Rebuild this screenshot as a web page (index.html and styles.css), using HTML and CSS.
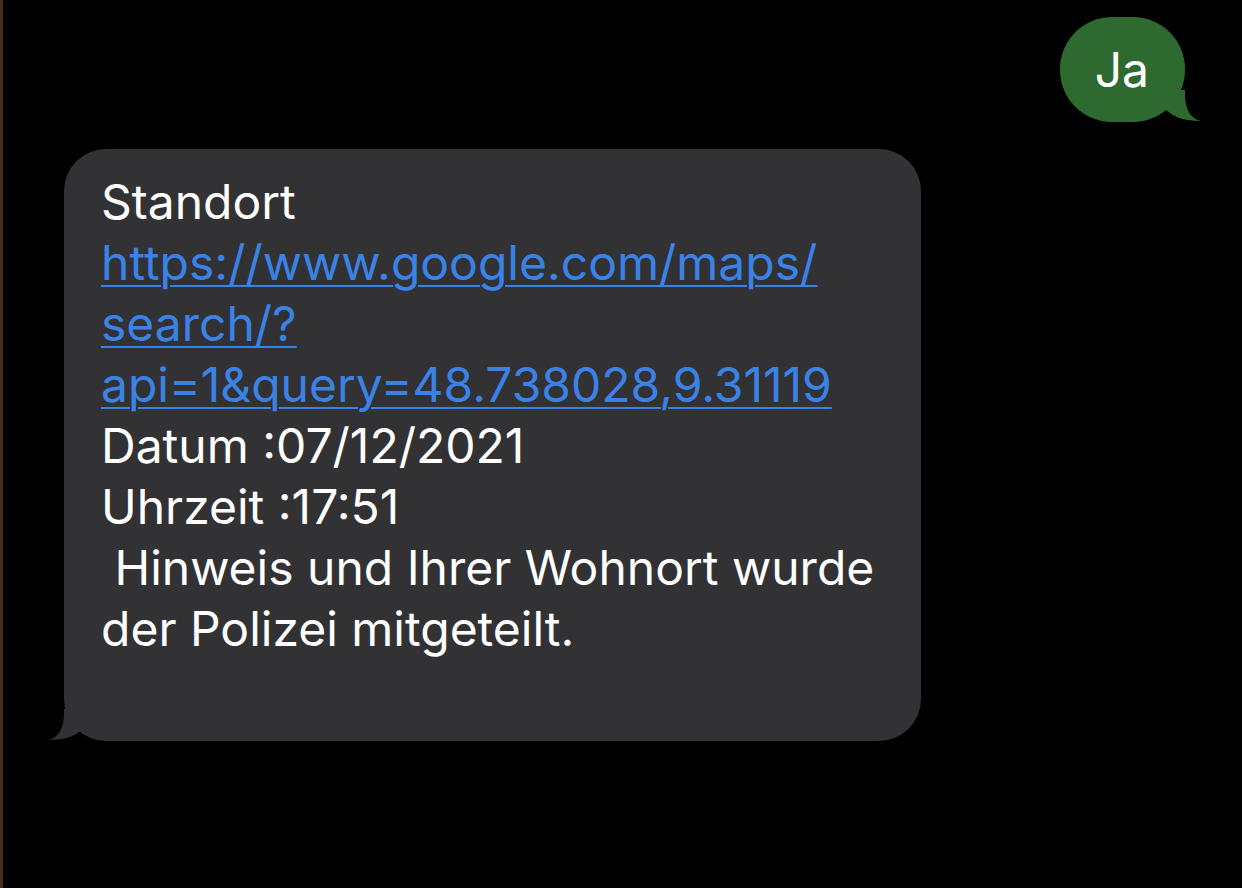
FILE: index.html
```html
<!DOCTYPE html>
<html lang="de">
<head>
<meta charset="utf-8">
<title>Nachrichten</title>
<link rel="stylesheet" href="styles.css">
</head>
<body>
<main class="thread">
  <div class="bubble sent">
    <span class="text">Ja</span>
    <svg class="tail tail-right" width="44" height="32" viewBox="0 0 44 32"><path d="M28,0 L28,4 C28,20 34,29 44,31 Q22,32 9,20 L0,12 L0,0 Z"/></svg>
  </div>
  <div class="bubble received">
    <p class="text">Standort<br><a class="link" href="#">https://www.google.com/maps/<br>search/?<br>api=1&amp;query=48.738028,9.31119</a><br>Datum :07/12/2021<br>Uhrzeit :17:51<br>&nbsp;Hinweis und Ihrer Wohnort wurde<br>der Polizei mitgeteilt.<br>&nbsp;</p>
    <svg class="tail tail-left" width="44" height="32" viewBox="0 0 44 32"><path d="M16,0 L16,4 C16,20 10,29 0,31 Q22,32 35,20 L44,12 L44,0 Z"/></svg>
  </div>
</main>
</body>
</html>
```
FILE: styles.css
```css
html, body {
  margin: 0;
  padding: 0;
  background: #000;
}
body {
  border-left: 3px solid #4a2c1e;
  min-height: 888px;
  box-sizing: border-box;
  font-family: "Inter", "Noto Sans", sans-serif;
  color: #fff;
}
.thread {
  display: flex;
  flex-direction: column;
  padding-top: 17px;
  gap: 27px;
}
.bubble {
  position: relative;
  font-size: 48px;
  line-height: 61px;
}
.text {
  margin: 0;
}
.sent {
  align-self: flex-end;
  margin-right: 57px;
  background: #2e6a30;
  border-radius: 52px;
  padding: 22px 36px 22px 35px;
}
.received {
  align-self: flex-start;
  margin-left: 61px;
  width: 857px;
  box-sizing: border-box;
  background: #323234;
  border-radius: 42px;
  padding: 22px 37px 21px 37px;
}
.link {
  color: #3b82e6;
  text-decoration: underline;
  text-decoration-thickness: 2px;
  text-underline-offset: 5px;
}
.tail {
  position: absolute;
  bottom: 0;
  display: block;
}
.tail-left {
  left: -16px;
  fill: #323234;
}
.tail-right {
  right: -16px;
  fill: #2e6a30;
}
```
